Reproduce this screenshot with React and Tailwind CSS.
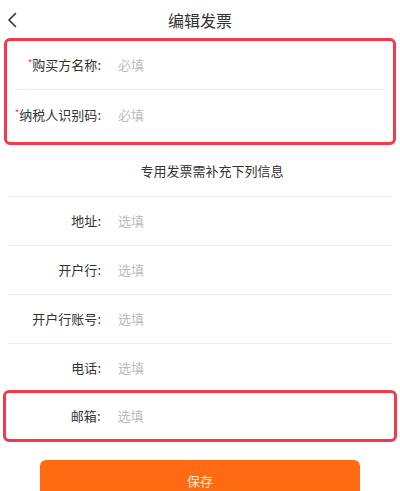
import React from "react";

const font = {
  fontFamily: '"Noto Sans CJK SC", "Noto Sans", sans-serif',
};

function Row({ label, placeholder, required, last, labelWidth, height = "h-[49px]" }) {
  return (
    <div
      className={`flex items-center ${height} ${
        last ? "" : "border-b border-[#eeeeee]"
      }`}
    >
      <div
        className={`${labelWidth} flex items-center justify-end whitespace-nowrap text-[13px] text-[#333333] shrink-0`}
      >
        {required && (
          <span className="text-[#f23a4c] text-[10px] leading-none relative -top-[2px]">
            *
          </span>
        )}
        {label}:
      </div>
      <div className="ml-[17px] text-[13px] text-[#bbbbbb]">{placeholder}</div>
    </div>
  );
}

export default function App() {
  return (
    <div className="w-[400px] h-[491px] bg-white overflow-hidden" style={font}>
      {/* header */}
      <div className="relative flex items-center justify-center h-[40px]">
        <svg
          className="absolute left-[6px] top-[12px]"
          width="12"
          height="16"
          viewBox="0 0 12 16"
          fill="none"
        >
          <path
            d="M9.5 1.5 L3 8 L9.5 14.5"
            stroke="#333333"
            strokeWidth="1.6"
            strokeLinecap="round"
            strokeLinejoin="round"
          />
        </svg>
        <h1 className="text-[16px] text-[#333333]">编辑发票</h1>
      </div>

      {/* required fields */}
      <div className="mt-[-2px] mx-[4px] border-[3.5px] border-[#f23a4c] rounded-[6px] px-[8px] pb-[3px]">
        <Row label="购买方名称" placeholder="必填" required labelWidth="w-[86px]" />
        <Row
          label="纳税人识别码"
          placeholder="必填"
          required
          last
          labelWidth="w-[86px]"
        />
      </div>

      <div className="flex items-center justify-center h-[52px] border-b border-[#eeeeee] mx-[8px] pl-[24px] text-[13px] text-[#333333]">
        专用发票需补充下列信息
      </div>

      <div className="px-[8px]">
        <Row label="地址" placeholder="选填" labelWidth="w-[93px]" />
        <Row label="开户行" placeholder="选填" labelWidth="w-[93px]" />
        <Row label="开户行账号" placeholder="选填" labelWidth="w-[93px]" />
        <Row label="电话" placeholder="选填" labelWidth="w-[93px]" />
      </div>

      <div className="-mt-[3px] mx-[3px] border-[3.5px] border-[#f23a4c] rounded-[6px] px-[5px]">
        <Row
          label="邮箱"
          placeholder="选填"
          last
          labelWidth="w-[89.5px]"
          height="h-[46px]"
        />
      </div>

      <div className="flex justify-center mt-[18px]">
        <button className="w-[320px] h-[42px] rounded-[6px] bg-[#ff6b12] text-[13px] text-[#ffe9d6]">
          保存
        </button>
      </div>
    </div>
  );
}
